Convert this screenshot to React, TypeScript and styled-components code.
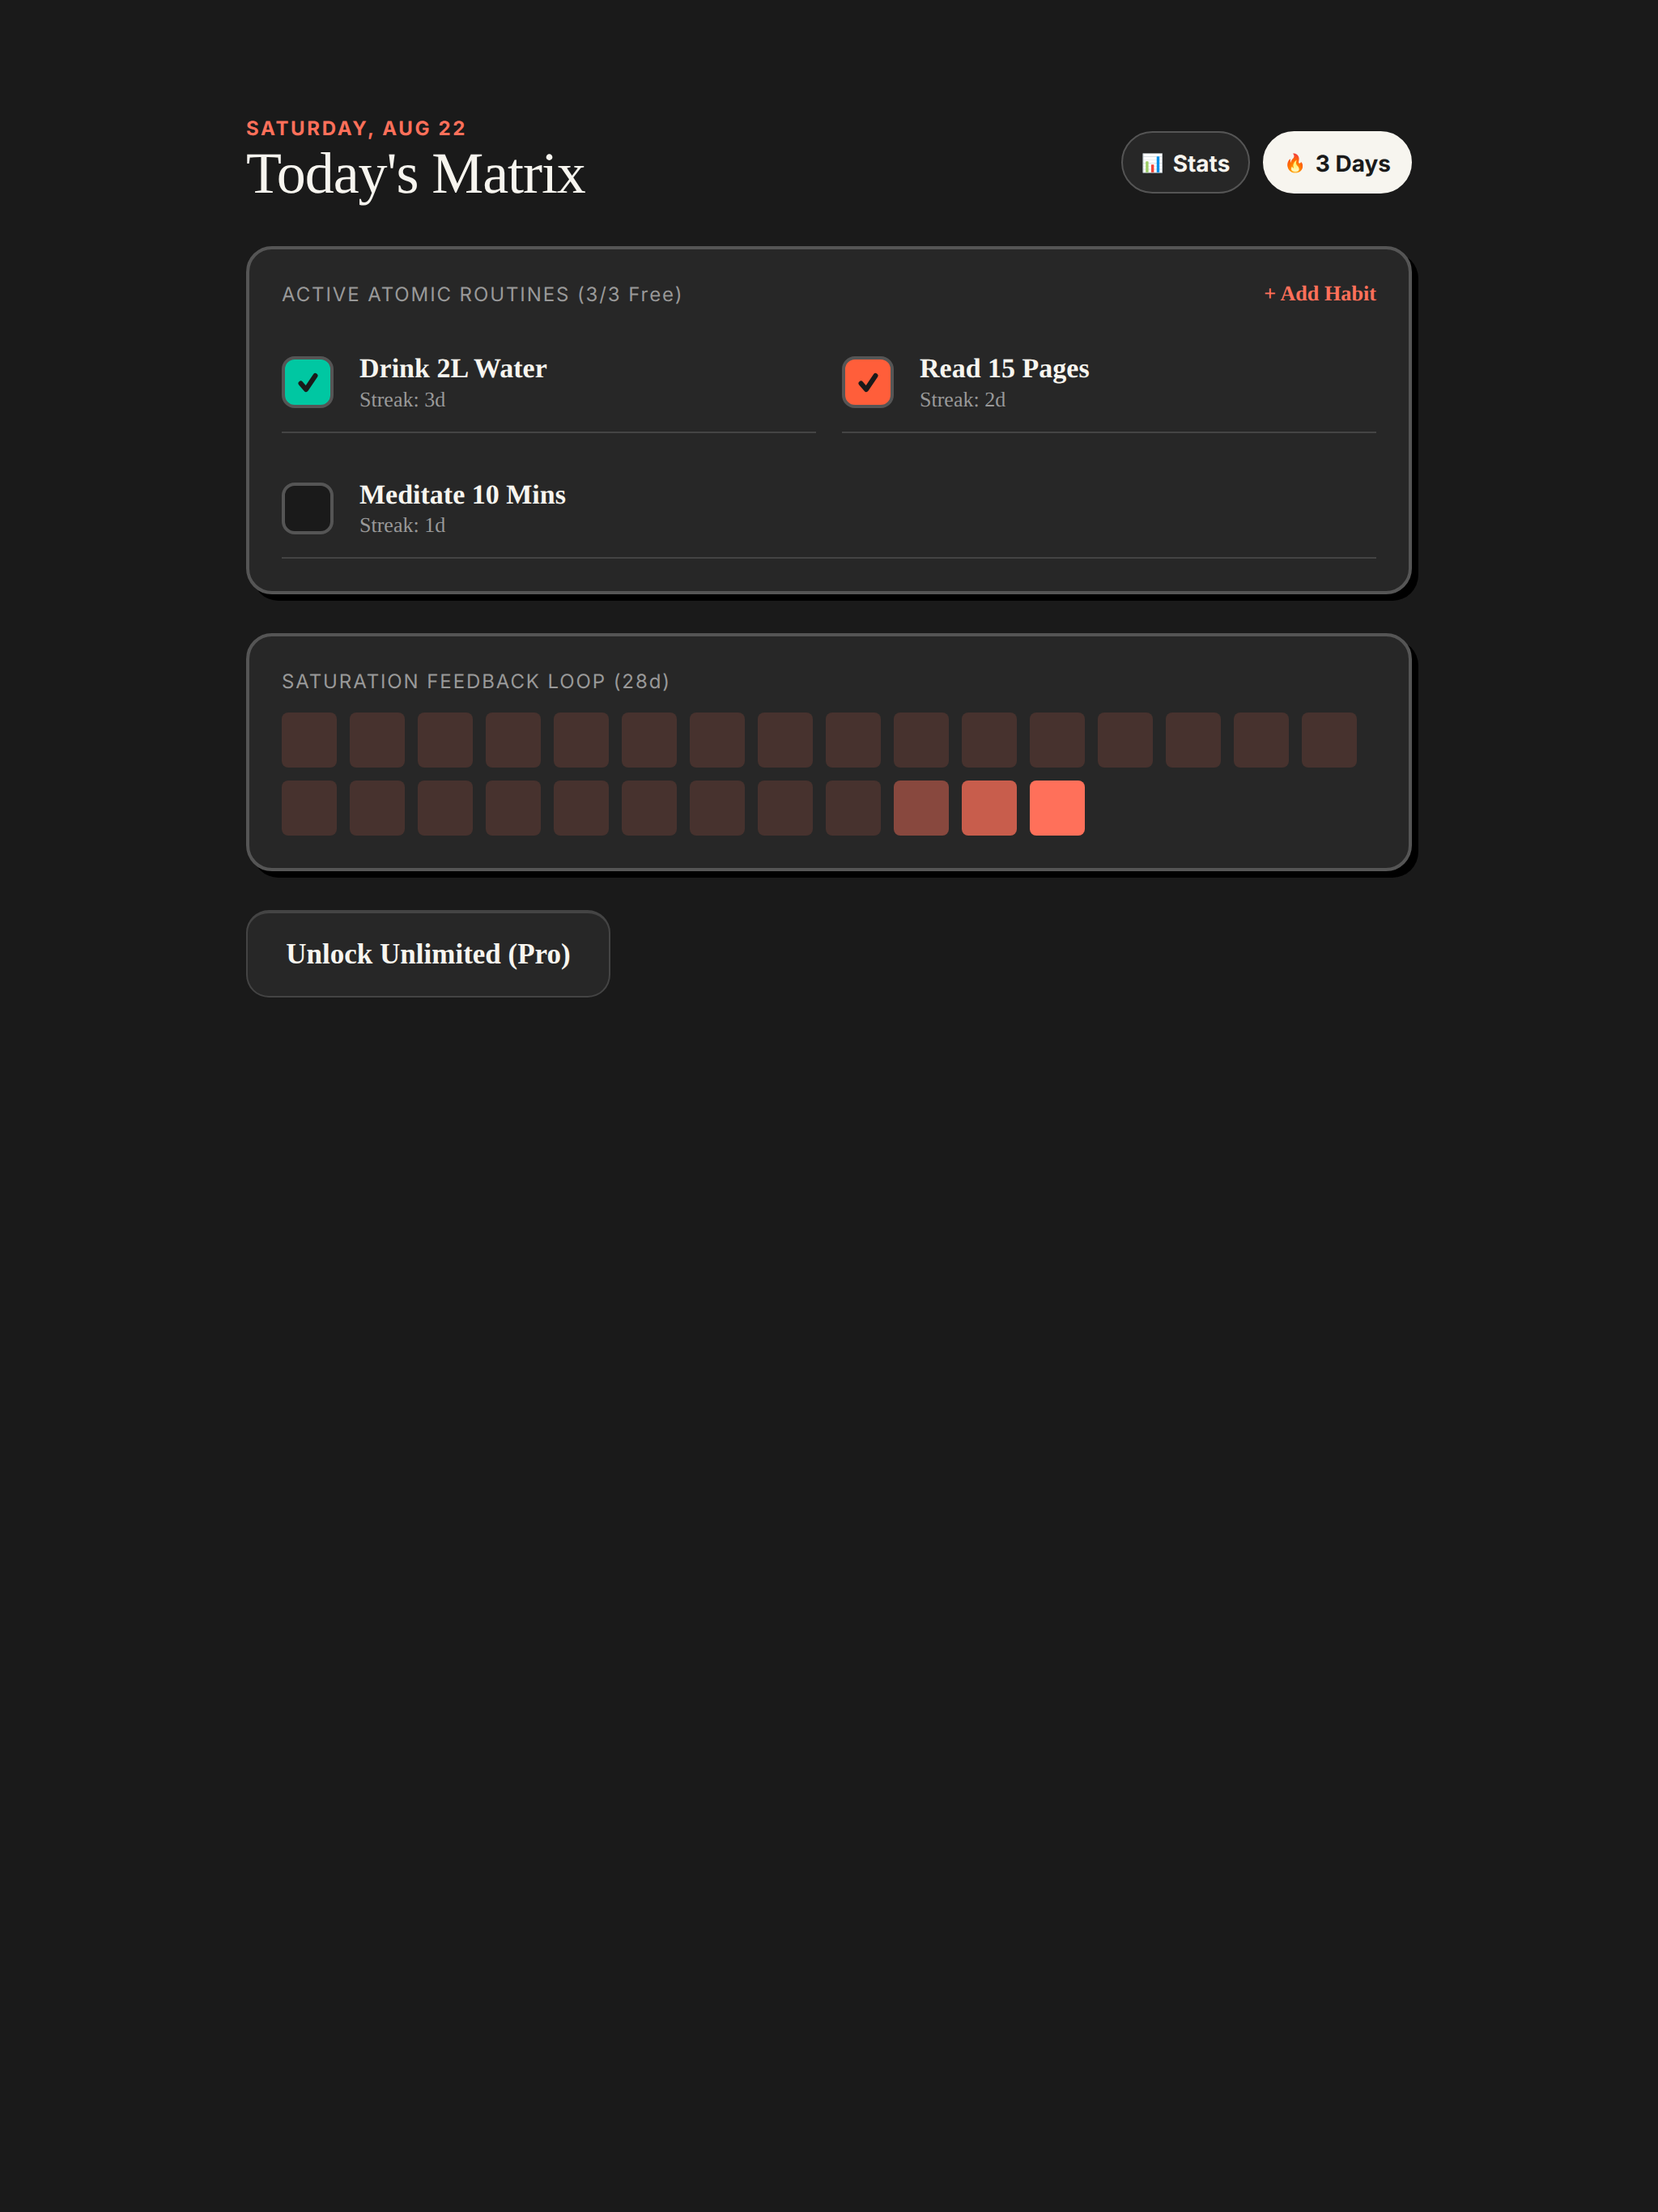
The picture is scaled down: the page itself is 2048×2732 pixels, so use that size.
import React from "react";
import styled, { createGlobalStyle } from "styled-components";

const Global = createGlobalStyle`
  html, body { margin: 0; padding: 0; background: #1a1a1a; }
  body { min-height: 2732px; text-rendering: geometricPrecision; }
  * { box-sizing: border-box; }
`;

const SERIF = `"Liberation Serif", "Times New Roman", serif`;
const SANS = `Inter, "Liberation Sans", sans-serif`;
const CORAL = "#ff705a";
const CREAM = "#f7f5ef";
const SURFACE = "#272727";
const MUTED = "#999999";

const Page = styled.main`
  width: 1440px;
  margin: 0 auto;
  padding-top: 144px;
  display: flex;
  flex-direction: column;
  align-items: stretch;
`;

const Header = styled.header`
  display: flex;
  justify-content: space-between;
  align-items: center;
  margin-bottom: 48px;
`;

const DateLine = styled.div`
  font-family: ${SANS};
  font-size: 24px;
  line-height: 29px;
  font-weight: 700;
  letter-spacing: 2.64px;
  color: ${CORAL};
`;

const Title = styled.h1`
  margin: 0;
  font-family: ${SERIF};
  font-size: 72px;
  line-height: 83px;
  font-weight: 400;
  letter-spacing: -1.08px;
  color: ${CREAM};
`;

const Pills = styled.div`
  display: flex;
  gap: 16px;
`;

const Pill = styled.div<{ $light?: boolean }>`
  height: 77px;
  display: flex;
  align-items: center;
  gap: 11px;
  padding: 4px ${(p) => (p.$light ? "24px" : "23px")} 0;
  border-radius: 40px;
  font-family: ${SANS};
  font-size: 28px;
  font-weight: 650;
  background: ${(p) => (p.$light ? CREAM : SURFACE)};
  color: ${(p) => (p.$light ? "#1a1a1a" : CREAM)};
  border: 2px solid ${(p) => (p.$light ? CREAM : "#555555")};
`;

const Emoji = styled.span`
  font-size: 22px;
`;

const Card = styled.section`
  background: ${SURFACE};
  border: 4px solid #555555;
  border-radius: 32px;
  box-shadow: 8px 8px 0 #000000;
  padding: 40px;
  margin-bottom: 48px;
`;

const CardHead = styled.div`
  display: flex;
  justify-content: space-between;
  align-items: center;
  margin-bottom: 31.2px;
`;

const CardLabel = styled.div`
  font-family: ${SANS};
  font-size: 24px;
  line-height: 32px;
  font-weight: 400;
  letter-spacing: 1.9px;
  color: ${MUTED};
`;

const AddLink = styled.div`
  font-family: ${SERIF};
  font-size: 26.2px;
  line-height: 30px;
  font-weight: 700;
  padding-bottom: 2px;
  color: ${CORAL};
`;

const Habits = styled.div`
  display: grid;
  grid-template-columns: 660px 660px;
  column-gap: 32px;
  row-gap: 32px;
`;

const Habit = styled.div<{ $wide?: boolean }>`
  display: flex;
  align-items: center;
  gap: 32px;
  padding: 24px 0;
  border-bottom: 2px solid #444444;
  grid-column: ${(p) => (p.$wide ? "1 / span 2" : "auto")};
`;

const Box = styled.div<{ $fill: string }>`
  width: 64px;
  height: 64px;
  flex: none;
  display: flex;
  align-items: center;
  justify-content: center;
  border: 4px solid #555555;
  border-radius: 16px;
  background: ${(p) => p.$fill};
`;

const HabitName = styled.div`
  font-family: ${SERIF};
  font-size: 34px;
  line-height: 39.6px;
  font-weight: 700;
  color: ${CREAM};
  padding-top: 1px;
  margin-bottom: 3px;
`;

const HabitStreak = styled.div`
  font-family: ${SERIF};
  font-size: 26px;
  line-height: 30px;
  color: ${MUTED};
`;

const Cells = styled.div`
  display: flex;
  flex-wrap: wrap;
  gap: 16px;
`;

const Cell = styled.div<{ $a: number }>`
  width: 68px;
  height: 68px;
  border-radius: 8px;
  background: ${CORAL};
  opacity: ${(p) => p.$a};
`;

const HeatLabel = styled(CardLabel)`
  margin-bottom: 22px;
`;

const Unlock = styled.button`
  align-self: flex-start;
  width: 450px;
  height: 108px;
  background: ${SURFACE};
  border: 2px solid #444444;
  border-top-width: 4px;
  border-radius: 28px;
  font-family: ${SERIF};
  font-size: 35px;
  font-weight: 700;
  color: ${CREAM};
  padding: 0;
`;

const Tick = () => (
  <svg width="32" height="32" viewBox="0 0 32 32" fill="none">
    <path
      d="M7.5 17.5L14 25L25.5 8"
      stroke="#1a1a1a"
      strokeWidth="6"
      strokeLinecap="round"
      strokeLinejoin="round"
    />
  </svg>
);

const habits = [
  { name: "Drink 2L Water", streak: "Streak: 3d", fill: "#00c7a2", done: true },
  { name: "Read 15 Pages", streak: "Streak: 2d", fill: "#ff5e3a", done: true },
  { name: "Meditate 10 Mins", streak: "Streak: 1d", fill: "#1a1a1a", done: false },
];

const cells = [...Array(25).fill(0.15), 0.45, 0.75, 1];

export default function App() {
  return (
    <>
      <Global />
      <Page>
        <Header>
          <div>
            <DateLine>SATURDAY, AUG 22</DateLine>
            <Title>Today's Matrix</Title>
          </div>
          <Pills>
            <Pill>
              <Emoji>📊</Emoji>
              <span>Stats</span>
            </Pill>
            <Pill $light>
              <Emoji>🔥</Emoji>
              <span>3 Days</span>
            </Pill>
          </Pills>
        </Header>

        <Card>
          <CardHead>
            <CardLabel>ACTIVE ATOMIC ROUTINES (3/3 Free)</CardLabel>
            <AddLink>+ Add Habit</AddLink>
          </CardHead>
          <Habits>
            {habits.map((h, i) => (
              <Habit key={h.name} $wide={i === 2}>
                <Box $fill={h.fill}>{h.done && <Tick />}</Box>
                <div>
                  <HabitName>{h.name}</HabitName>
                  <HabitStreak>{h.streak}</HabitStreak>
                </div>
              </Habit>
            ))}
          </Habits>
        </Card>

        <Card>
          <HeatLabel>SATURATION FEEDBACK LOOP (28d)</HeatLabel>
          <Cells>
            {cells.map((a, i) => (
              <Cell key={i} $a={a} />
            ))}
          </Cells>
        </Card>

        <Unlock>Unlock Unlimited (Pro)</Unlock>
      </Page>
    </>
  );
}
